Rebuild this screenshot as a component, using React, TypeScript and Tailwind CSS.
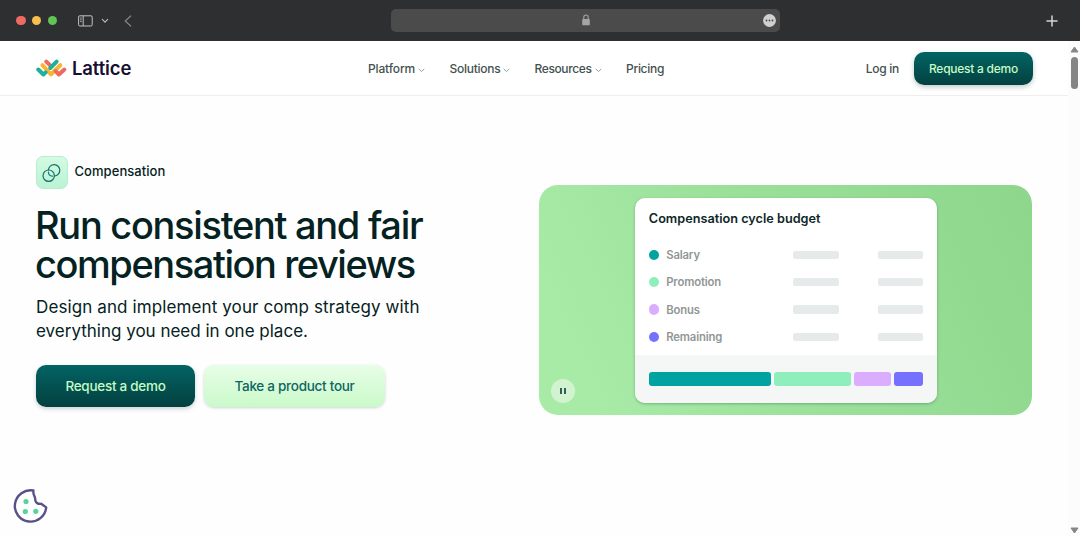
const rows = [
  { label: "Salary", dot: "bg-[#01a3a0]" },
  { label: "Promotion", dot: "bg-[#8eefbd]" },
  { label: "Bonus", dot: "bg-[#dbadff]" },
  { label: "Remaining", dot: "bg-[#7670ff]" },
];

const segments = [
  "w-[122px] bg-[#01a3a0]",
  "w-[77px] bg-[#8eefbd]",
  "w-[37.5px] bg-[#dbadff]",
  "w-[29px] bg-[#7670ff]",
];

function BrowserBar() {
  return (
    <header className="flex h-[41px] shrink-0 items-center bg-[#2e2f30] pr-[22px] pl-4">
      <div className="flex w-[375px] items-center">
        <div className="flex gap-[6.4px]">
          <span className="size-[9.5px] rounded-full bg-[#ed6b60]" />
          <span className="size-[9.5px] rounded-full bg-[#f5be4f]" />
          <span className="size-[9.5px] rounded-full bg-[#61c554]" />
        </div>
        <svg className="ml-[20.5px]" width="15" height="12" viewBox="0 0 15 12" fill="none" stroke="#c2c2c2">
          <rect x="0.6" y="0.8" width="13.6" height="10.2" rx="1.2" />
          <path d="M5.2 1v10" />
          <path d="M2 3h1.8M2 4.8h1.8M2 6.6h1.8" strokeWidth="0.8" />
        </svg>
        <svg className="ml-[8px]" width="8" height="6" viewBox="0 0 8 6" fill="none" stroke="#b5b5b5" strokeWidth="1.2">
          <path d="M1.3 1.4 4 4.2 6.7 1.4" strokeLinecap="round" />
        </svg>
        <svg className="ml-[15px]" width="8" height="12" viewBox="0 0 8 12" fill="none" stroke="#858585" strokeWidth="1.2">
          <path d="M6.7 1 1.2 6l5.5 5" strokeLinecap="round" strokeLinejoin="round" />
        </svg>
      </div>
      <div className="flex h-[22.5px] w-[389px] items-center justify-end rounded-[5px] bg-[#4b4b4b] pr-[4.5px]">
        <svg className="mr-[172.5px] mb-[1px]" width="8" height="12" viewBox="0 0 8 12">
          <path d="M1.8 6V3.2a2.2 2.2 0 0 1 4.4 0V6" fill="none" stroke="#a5a5a5" strokeWidth="1.1" />
          <rect x="0.2" y="5" width="7.6" height="6.3" rx="0.9" fill="#a5a5a5" />
        </svg>
        <svg width="13" height="13" viewBox="0 0 13 13">
          <circle cx="6.5" cy="6.5" r="6.4" fill="#d0d0d0" />
          <circle cx="3.5" cy="6.5" r="0.9" fill="#4b4b4b" />
          <circle cx="6.5" cy="6.5" r="0.9" fill="#4b4b4b" />
          <circle cx="9.5" cy="6.5" r="0.9" fill="#4b4b4b" />
        </svg>
      </div>
      <svg className="ml-auto" width="12" height="12" viewBox="0 0 12 12" stroke="#d5d5d5" strokeWidth="1.5" strokeLinecap="round">
        <path d="M6 1v10M1 6h10" />
      </svg>
    </header>
  );
}

function Logo() {
  return (
    <div className="flex items-center">
      <svg width="31" height="19" viewBox="0 0 31 19" fill="none" strokeWidth="4" strokeLinecap="round" strokeLinejoin="round">
        <path d="M10.3 2.6 15.2 7.4" stroke="#ef695e" />
        <path d="M6.4 6.2 15 15.3 24.3 6.2" stroke="#f9b532" />
        <path d="M2.3 10.5 7.4 15.5 9.6 13.4" stroke="#1fb09c" />
        <path d="M14.3 9 20.6 2.6" stroke="#1fb09c" />
        <path d="M19.7 12.2 22.9 15.5 28.3 10.5" stroke="#ef695e" />
      </svg>
      <span className="ml-[5px] text-[18.5px] leading-6 font-semibold tracking-[-0.12px] text-[#170f30]">Lattice</span>
    </div>
  );
}

function NavItem({ label, className, menu = true }: { label: string; className: string; menu?: boolean }) {
  return (
    <a className={`flex items-center text-[12px] font-medium ${className}`}>
      {label}
      {menu && (
        <svg className="mt-[2px] ml-[3px]" width="7" height="5" viewBox="0 0 7 5" fill="none" stroke="#929d9b" strokeWidth="1">
          <path d="M1 1.2 3.5 3.5 6 1.2" strokeLinecap="round" />
        </svg>
      )}
    </a>
  );
}

function SiteNav() {
  return (
    <nav className="flex h-[55px] shrink-0 items-center border-b border-[#eeeeee] bg-white pr-[35px] pl-[36px] text-[#43514f]">
      <div className="w-[332px]">
        <Logo />
      </div>
      <div className="flex items-center pt-[2px]">
        <NavItem label="Platform" className="w-[81.5px] tracking-[-0.14px]" />
        <NavItem label="Solutions" className="w-[85px] tracking-[-0.26px]" />
        <NavItem label="Resources" className="w-[91.5px] tracking-[-0.38px]" />
        <NavItem label="Pricing" className="tracking-[-0.3px]" menu={false} />
      </div>
      <a className="ml-auto pt-[2px] text-[12px] font-medium tracking-[-0.28px]">Log in</a>
      <button className="ml-[15px] h-[33px] w-[119px] rounded-[10px] bg-linear-to-b from-[#036464] to-[#034141] pt-[2px] text-[12px] font-medium tracking-[-0.25px] text-[#c5fbc4] shadow-[0_2px_5px_rgba(0,40,40,0.25)]">
        Request a demo
      </button>
    </nav>
  );
}

function BudgetPanel() {
  return (
    <div className="relative flex h-[230px] w-[493px] justify-center rounded-[19px] bg-[linear-gradient(65deg,#a8eba7_10%,#9ae099_50%,#8ed68c_100%)] pt-[12.5px]">
      <div className="ml-[1px] flex h-[205.5px] w-[302px] flex-col overflow-hidden rounded-[10px] bg-white shadow-[0_1px_3px_rgba(0,50,30,0.3)]">
        <h2 className="mt-[13px] ml-[13.5px] text-[12.7px] leading-4 font-semibold text-[#0e2727]">
          Compensation cycle budget
        </h2>
        <ul className="mt-[14.6px] flex flex-col pr-[14px] pl-[13.5px]">
          {rows.map((row) => (
            <li key={row.label} className="flex h-[27.4px] items-center">
              <span className={`size-[10.4px] rounded-full ${row.dot}`} />
              <span className="ml-[7px] w-[127.3px] pt-px text-[11.3px] font-semibold tracking-[-0.15px] text-[#919696]">{row.label}</span>
              <span className="h-[8.5px] w-[45.5px] rounded-[2px] bg-[#e6eaea]" />
              <span className="ml-auto h-[8.5px] w-[45.5px] rounded-[2px] bg-[#e6eaea]" />
            </li>
          ))}
        </ul>
        <div className="mt-auto flex h-[48px] items-center justify-between bg-[#f5f7f7] pr-[14px] pl-[13.5px]">
          {segments.map((segment) => (
            <span key={segment} className={`h-[14px] rounded-[3px] ${segment}`} />
          ))}
        </div>
      </div>
      <button className="absolute bottom-[12px] left-[12px] flex size-6 items-center justify-center rounded-full bg-[#d2f3d0]" aria-label="Pause">
        <svg width="6" height="6" viewBox="0 0 6 6" fill="#0b3838">
          <path d="M0.2 0h1.6v6H0.2zM4.2 0h1.6v6H4.2z" />
        </svg>
      </button>
    </div>
  );
}

function Hero() {
  return (
    <main className="flex flex-1 items-start pl-[36px]">
      <section className="w-[503.3px] pt-[60px] text-[#042222]">
        <div className="flex items-center">
          <span className="flex h-[33px] w-8 items-center justify-center rounded-[7px] border border-[#b9edd2] bg-linear-to-b from-[#d3fbe3] to-[#baf3d3]">
            <svg className="mt-[2px] ml-[-1px]" width="19" height="19" viewBox="0 0 19 19" fill="none" stroke="#146f6d" strokeWidth="1.2" strokeLinecap="round">
              <circle cx="6.7" cy="11.7" r="5.7" />
              <path d="M6.4 5.9a5.7 5.7 0 1 1 6.1 6.1" />
              <path d="M6.4 8.2c.2 2.3 1.8 3.8 4 4" />
            </svg>
          </span>
          <span className="mb-[3px] ml-[6.5px] text-[13px] leading-5 font-medium tracking-[0.06px]">Compensation</span>
        </div>
        <h1 className="mt-[17px] -ml-px text-[38px] leading-[39px] font-medium whitespace-nowrap">
          <span className="block tracking-[-1.3px]">Run consistent and fair</span>
          <span className="block tracking-[-1.43px]">compensation reviews</span>
        </h1>
        <p className="mt-[11px] text-[17px] leading-6 whitespace-nowrap">
          <span className="block tracking-[0.11px]">Design and implement your comp strategy with</span>
          <span className="block">everything you need in one place.</span>
        </p>
        <div className="mt-[22px] flex gap-[9px] text-[13.5px] font-medium tracking-[-0.28px]">
          <button className="h-[41.5px] w-[159px] rounded-[10px] bg-linear-to-b from-[#036464] to-[#034040] text-[#c5fbc4] shadow-[0_2px_4px_rgba(0,40,40,0.2)]">
            Request a demo
          </button>
          <button className="h-[41.5px] w-[181px] rounded-[10px] bg-linear-to-b from-[#e7fde7] to-[#cafac9] text-[#0d6662] shadow-[0_1px_3px_rgba(0,40,40,0.2)]">
            Take a product tour
          </button>
        </div>
      </section>
      <section className="pt-[89px]">
        <BudgetPanel />
      </section>
    </main>
  );
}

function ScrollBar() {
  return (
    <aside className="flex w-3 flex-col items-center bg-[#fcfcfc] pt-[4.5px] pb-[2px]">
      <svg className="ml-[1px]" width="9" height="7" viewBox="0 0 9 7">
        <path d="M4.5 1 8 6H1Z" fill="#868686" stroke="#868686" strokeLinejoin="round" />
      </svg>
      <span className="mt-[4.5px] ml-[1px] h-[32px] w-[7.5px] rounded-full bg-[#858585]" />
      <svg className="mt-auto ml-[1px]" width="9" height="7" viewBox="0 0 9 7">
        <path d="M4.5 6 8 1H1Z" fill="#868686" stroke="#868686" strokeLinejoin="round" />
      </svg>
    </aside>
  );
}

export default function App() {
  return (
    <div className="flex h-[536px] w-[1080px] flex-col overflow-hidden bg-[#fefefe] font-['Inter',sans-serif]">
      <BrowserBar />
      <div className="flex flex-1">
        <div className="flex w-[1068px] flex-col">
          <SiteNav />
          <Hero />
        </div>
        <ScrollBar />
      </div>
      <button className="absolute top-[488px] left-[12px]" aria-label="Cookie settings">
        <svg width="36" height="36" viewBox="0 0 36 36" fill="#fff" stroke="#57508b" strokeWidth="2.4" strokeLinejoin="round">
          <path d="M21.4 2.5A15.7 15.7 0 1 0 34.2 19.4L29.2 15.8C26 16.2 23 14.7 23.2 10.8C23 8 20.8 7 21.4 2.5Z" />
          <g fill="#56d49d" stroke="none">
            <circle cx="14" cy="13.5" r="2.6" />
            <circle cx="13.3" cy="23.5" r="2.6" />
            <circle cx="23.8" cy="23.3" r="2.6" />
          </g>
        </svg>
      </button>
    </div>
  );
}
